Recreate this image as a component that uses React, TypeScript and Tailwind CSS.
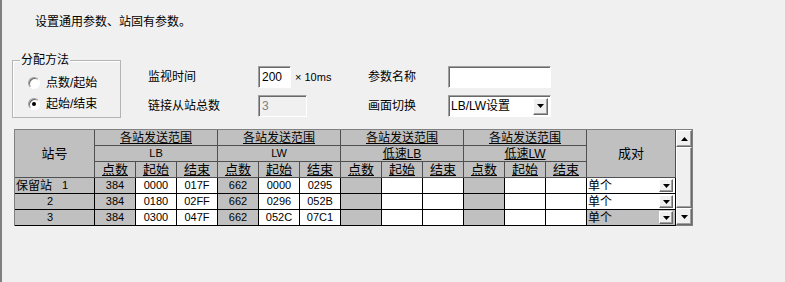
import type { ReactNode } from 'react';

const sunken =
  'border border-t-[#a0a0a0] border-l-[#a0a0a0] border-r-white border-b-white shadow-[inset_1px_1px_0_#696969]';
const raised =
  'bg-[#f0f0f0] border border-t-white border-l-white border-r-[#696969] border-b-[#696969] shadow-[inset_-1px_-1px_0_#a0a0a0]';

function Tri({ up = false }: { up?: boolean }) {
  return (
    <svg width="7" height="4" viewBox="0 0 7 4" className="block">
      <path d={up ? 'M0 4L3.5 0L7 4Z' : 'M0 0L7 0L3.5 4Z'} fill="#000" />
    </svg>
  );
}

function Radio({ checked, label }: { checked?: boolean; label: string }) {
  return (
    <div className="flex items-center h-[14px]">
      <span className="w-[12px] h-[12px] rounded-full bg-white border border-t-[#a0a0a0] border-l-[#a0a0a0] border-r-white border-b-white shadow-[inset_1px_1px_0_#696969] flex items-center justify-center">
        {checked && <span className="w-[4px] h-[4px] rounded-full bg-black" />}
      </span>
      <span className="ml-[6px] leading-none">{label}</span>
    </div>
  );
}

function H({ children, className = '' }: { children?: ReactNode; className?: string }) {
  return (
    <div
      className={`bg-[#c0c0c0] border-r border-b border-[#505050] flex items-center justify-center leading-none ${className}`}
    >
      {children}
    </div>
  );
}

function D({
  children,
  gray,
  justify = 'justify-center',
  className = '',
}: {
  children?: ReactNode;
  gray?: boolean;
  justify?: string;
  className?: string;
}) {
  return (
    <div
      className={`${gray ? 'bg-[#c0c0c0]' : 'bg-white'} border-r border-b border-black flex items-center ${justify} leading-none text-[11px] ${className}`}
    >
      {children}
    </div>
  );
}

const rows = [
  { id: '保留站', no: '1', lb: ['384', '0000', '017F'], lw: ['662', '0000', '0295'], sel: false },
  { id: '', no: '2', lb: ['384', '0180', '02FF'], lw: ['662', '0296', '052B'], sel: false },
  { id: '', no: '3', lb: ['384', '0300', '047F'], lw: ['662', '052C', '07C1'], sel: true },
];

export default function App() {
  return (
    <div className="w-[785px] h-[282px] bg-[#f0f0f0] border-l-2 border-[#808080] text-[12px] text-black font-['Liberation_Sans','Noto_Sans_CJK_SC',sans-serif] flex flex-col pt-[15px]">
      <p className="ml-[33px] leading-[14px]">设置通用参数、站固有参数。</p>

      <div className="flex items-start mt-[31px]">
        {/* 分配方法 group */}
        <div className="relative ml-[10px] w-[109px] h-[58px] border border-[#b4b4b4] shadow-[inset_1px_1px_0_#fff] pt-[15px] pl-[15px] flex flex-col gap-[7px]">
          <span className="absolute -top-[8px] left-[7px] px-[1px] bg-[#f0f0f0] leading-[14px]">分配方法</span>
          <Radio label="点数/起始" />
          <Radio checked label="起始/结束" />
        </div>

        <div className="ml-[27px] mt-[6px] grid grid-cols-[110px_110px_80px_103px] grid-rows-[22px_22px] gap-y-[7px] items-center">
          <span className="leading-none">监视时间</span>
          <div className="flex items-center">
            <div className={`w-[33px] h-[22px] bg-white ${sunken} flex items-center pl-[3px] text-[12px] leading-none`}>
              200
            </div>
            <span className="ml-[4px] text-[11px] leading-none">× 10ms</span>
          </div>
          <span className="leading-none">参数名称</span>
          <div className={`w-[103px] h-[22px] bg-white ${sunken}`} />

          <span className="leading-none">链接从站总数</span>
          <div className={`w-[49px] h-[22px] bg-[#f0f0f0] ${sunken} flex items-center pl-[3px] text-[#808080] leading-none`}>
            3
          </div>
          <span className="leading-none">画面切换</span>
          <div className={`w-[103px] h-[22px] bg-white ${sunken} flex items-center justify-between pl-[2px] pr-[2px]`}>
            <span className="leading-none">LB/LW设置</span>
            <span className={`w-[15px] h-[17px] ${raised} flex items-center justify-center`}>
              <Tri />
            </span>
          </div>
        </div>
      </div>

      {/* table */}
      <div className="flex ml-[12px] mt-[11px]">
        <div className="grid grid-cols-[80px_repeat(12,41px)_89px] grid-rows-[16px_16px_16px_16px_16px_16px] border-l border-t border-[#808080]">
          <H className="row-span-3 text-[13px]">站号</H>
          <H className="col-span-3"><span className="underline underline-offset-[1px]">各站发送范围</span></H>
          <H className="col-span-3"><span className="underline underline-offset-[1px]">各站发送范围</span></H>
          <H className="col-span-3"><span className="underline underline-offset-[1px]">各站发送范围</span></H>
          <H className="col-span-3"><span className="underline underline-offset-[1px]">各站发送范围</span></H>
          <H className="row-span-3 text-[13px]">成对</H>

          <H className="col-span-3 text-[11px]">LB</H>
          <H className="col-span-3 text-[11px]">LW</H>
          <H className="col-span-3"><span className="underline underline-offset-[1px]">低速LB</span></H>
          <H className="col-span-3"><span className="underline underline-offset-[1px]">低速LW</span></H>

          {[0, 1, 2, 3].flatMap((g) =>
            ['点数', '起始', '结束'].map((t) => (
              <H key={`${g}-${t}`} className="text-[13px]">
                <span className="underline underline-offset-[1px]">{t}</span>
              </H>
            )),
          )}

          {rows.map((r) => (
            <div key={r.no} className="contents">
              <D gray justify="justify-start">
                {r.id ? (
                  <>
                    <span className="ml-[1px] text-[12px]">{r.id}</span>
                    <span className="ml-[10px]">{r.no}</span>
                  </>
                ) : (
                  <span className="ml-[32px]">{r.no}</span>
                )}
              </D>
              <D gray>{r.lb[0]}</D>
              <D>{r.lb[1]}</D>
              <D>{r.lb[2]}</D>
              <D gray>{r.lw[0]}</D>
              <D>{r.lw[1]}</D>
              <D>{r.lw[2]}</D>
              <D gray />
              <D />
              <D />
              <D gray />
              <D />
              <D />
              <D gray={r.sel} justify="justify-between" className="pl-[1px] pr-[2px]">
                <span className="text-[12px]">单个</span>
                <span className={`w-[14px] h-[13px] ${raised} flex items-center justify-center`}>
                  <Tri />
                </span>
              </D>
            </div>
          ))}
        </div>

        {/* scrollbar */}
        <div className="w-[17px] h-[97px] border-t border-r border-b border-[#808080] bg-[#f0f0f0] flex flex-col">
          <div className={`h-[17px] ${raised} flex items-center justify-center`}>
            <Tri up />
          </div>
          <div className={`flex-1 ${raised}`} />
          <div className={`h-[17px] ${raised} flex items-center justify-center`}>
            <Tri />
          </div>
        </div>
      </div>
    </div>
  );
}
